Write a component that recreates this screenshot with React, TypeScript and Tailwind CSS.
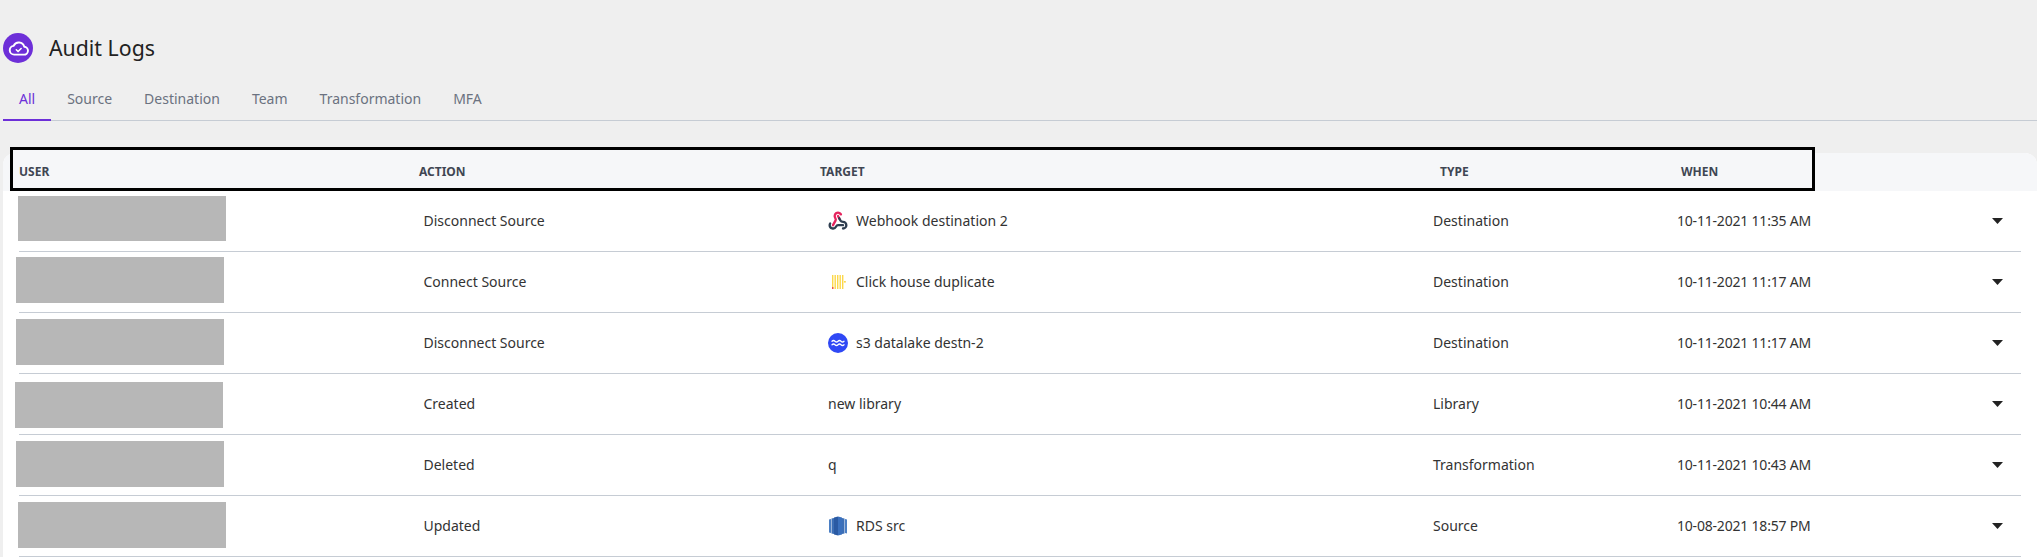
const tabs = ['All', 'Source', 'Destination', 'Team', 'Transformation', 'MFA']

function CloudBadge() {
  return (
    <div className="w-[30px] h-[30px] rounded-full bg-[#6d2fd8] flex items-center justify-center">
      <svg width="21" height="21" viewBox="0 0 24 24" fill="none" stroke="#fff" strokeWidth="2.2" strokeLinecap="round" strokeLinejoin="round">
        <path d="M18 19H7a5 5 0 0 1-.6-9.96A6.5 6.5 0 0 1 18.6 10 4.5 4.5 0 0 1 18 19Z" />
        <path d="m9.5 13.5 2 2 3.5-3.5" strokeWidth="1.8" />
      </svg>
    </div>
  )
}

function WebhookIcon() {
  return (
    <svg width="20" height="20" viewBox="0 0 24 24" fill="none" strokeWidth="2.8" strokeLinecap="round" strokeLinejoin="round">
      <path stroke="#2f3e50" d="M18 16.98h-5.99c-1.1 0-1.95.94-2.48 1.9A4 4 0 0 1 2 17c.01-.7.2-1.4.57-2" />
      <path stroke="#e6245e" d="m6 17 3.13-5.78c.53-.97.1-2.18-.5-3.1a4 4 0 1 1 6.89-4.06" />
      <path stroke="#e6245e" d="m12 6 1.5 2.8" />
      <path stroke="#2f3e50" d="m13.500 8.800 1.630 2.930C15.660 12.700 16.900 13 18 13a4 4 0 0 1 0 8" />
    </svg>
  )
}

function ClickHouseIcon() {
  return (
    <svg width="20" height="20" viewBox="0 0 20 20">
      <rect x="4" y="3" width="1.400" height="14" fill="#fcd84a" />
      <rect x="4" y="15" width="1.400" height="2" fill="#f0524b" />
      <rect x="6.500" y="3" width="1.400" height="14" fill="#fcd84a" />
      <rect x="9" y="3" width="1.400" height="14" fill="#fcd84a" />
      <rect x="11.500" y="3" width="1.400" height="14" fill="#fcd84a" />
      <rect x="14" y="3" width="1.400" height="14" fill="#fcd84a" />
      <rect x="16" y="9" width="1.800" height="1.600" fill="#fcd84a" />
    </svg>
  )
}

function DatalakeIcon() {
  return (
    <svg width="20" height="20" viewBox="0 0 20 20" fill="none" stroke="#fff" strokeWidth="1.3" strokeLinecap="round">
      <circle cx="10" cy="10" r="10" fill="#2f48f5" stroke="none" />
      <path d="M4 8.200c1-1 2-1 3 0s2 1 3 0 2-1 3 0 2 1 3 0" />
      <path d="M4 11.800c1-1 2-1 3 0s2 1 3 0 2-1 3 0 2 1 3 0" />
    </svg>
  )
}

function RdsIcon() {
  return (
    <svg width="20" height="20" viewBox="0 0 20 20">
      <path d="M1 3.500 3 3v14l-2-.5Z" fill="#4b7fc4" />
      <path d="M19 3.500 17 3v14l2 .5Z" fill="#4b7fc4" />
      <path d="M3.500 2.500 6 2v16l-2.500-.5Z" fill="#3c6fb6" />
      <path d="M16.500 2.500 14 2v16l2.500-.5Z" fill="#3c6fb6" />
      <path d="M6 1.500 10 0.500v19l-4-1Z" fill="#2a5aa3" />
      <path d="M14 1.500 10 0.500v19l4-1Z" fill="#3a70bd" />
    </svg>
  )
}

function Caret() {
  return (
    <svg width="11" height="6" viewBox="0 0 11 6">
      <path d="M0 0h11L5.500 6Z" fill="#222" />
    </svg>
  )
}

// the masked user cells do not line up from row to row in the screenshot
const rows = [
  { block: 'ml-[-1px] mt-[5px] h-[45px]', action: 'Disconnect Source', target: 'Webhook destination 2', icon: <WebhookIcon />, type: 'Destination', when: '10-11-2021 11:35 AM' },
  { block: 'ml-[-3px] mt-[5px] h-[46px]', action: 'Connect Source', target: 'Click house duplicate', icon: <ClickHouseIcon />, type: 'Destination', when: '10-11-2021 11:17 AM' },
  { block: 'ml-[-3px] mt-[6px] h-[46px]', action: 'Disconnect Source', target: 's3 datalake destn-2', icon: <DatalakeIcon />, type: 'Destination', when: '10-11-2021 11:17 AM' },
  { block: 'ml-[-4px] mt-[8px] h-[46px]', action: 'Created', target: 'new library', type: 'Library', when: '10-11-2021 10:44 AM' },
  { block: 'ml-[-3px] mt-[6px] h-[46px]', action: 'Deleted', target: 'q', type: 'Transformation', when: '10-11-2021 10:43 AM' },
  { block: 'ml-[-1px] mt-[6px] h-[46px]', action: 'Updated', target: 'RDS src', icon: <RdsIcon />, type: 'Source', when: '10-08-2021 18:57 PM' },
]

export default function App() {
  return (
    <div className="h-[557px] overflow-hidden bg-[#efefef] font-['Noto_Sans',sans-serif]">
      {/* Title */}
      <div className="flex items-center gap-[16px] pt-[33px] pl-[3px] h-[63px]">
        <CloudBadge />
        <h1 className="text-[21.3px] leading-[30px] text-[#222]">Audit Logs</h1>
      </div>

      {/* Tabs */}
      <div className="mt-[20px] ml-[3px] flex h-[38px] border-b border-[#c6ccd4]">
        {tabs.map((tab, i) => (
          <div
            key={tab}
            className={
              i === 0
                ? 'px-[16px] h-[38px] text-sm leading-[32px] text-[#6d2fd8] border-b-2 border-[#6d2fd8]'
                : 'px-[16px] text-sm leading-[32px] text-[#6b7280]'
            }
          >
            {tab}
          </div>
        ))}
      </div>

      {/* Table */}
      <div className="mt-[32px] ml-[3px] rounded-t-xl bg-white">
        <div className="rounded-t-xl bg-[#f6f7f9] h-[38px]">
          {/* outlined header box sticks out above the card */}
          <div className="relative top-[-6px] ml-[7px] w-[1805px] h-[44px] bg-[#f6f7f9] border-[3px] border-black flex items-center text-xs font-bold text-[#3f4653] pt-[6px]">
            <div className="w-[400px] pl-[6px]">USER</div>
            <div className="w-[401px] pl-[6px]">ACTION</div>
            <div className="w-[620px] pl-[6px]">TARGET</div>
            <div className="w-[241px] pl-[6px]">TYPE</div>
            <div className="pl-[6px]">WHEN</div>
          </div>
        </div>

        {rows.map((row) => (
          <div key={row.when + row.action} className="mx-[16px] h-[61px] border-b border-[#c6ccd4] grid grid-cols-[404px_405px_605px_244px_1fr_auto] items-center text-sm text-[#333]">
            <div className={`w-[208px] self-start bg-[#b7b7b7] ${row.block}`} />
            <div className="pl-[0.5px]">{row.action}</div>
            <div className="flex items-center gap-[8px]">
              {row.icon}
              <span>{row.target}</span>
            </div>
            <div>{row.type}</div>
            <div className="tracking-[-0.2px]">{row.when}</div>
            <div className="mr-[18px]">
              <Caret />
            </div>
          </div>
        ))}
      </div>
    </div>
  )
}
